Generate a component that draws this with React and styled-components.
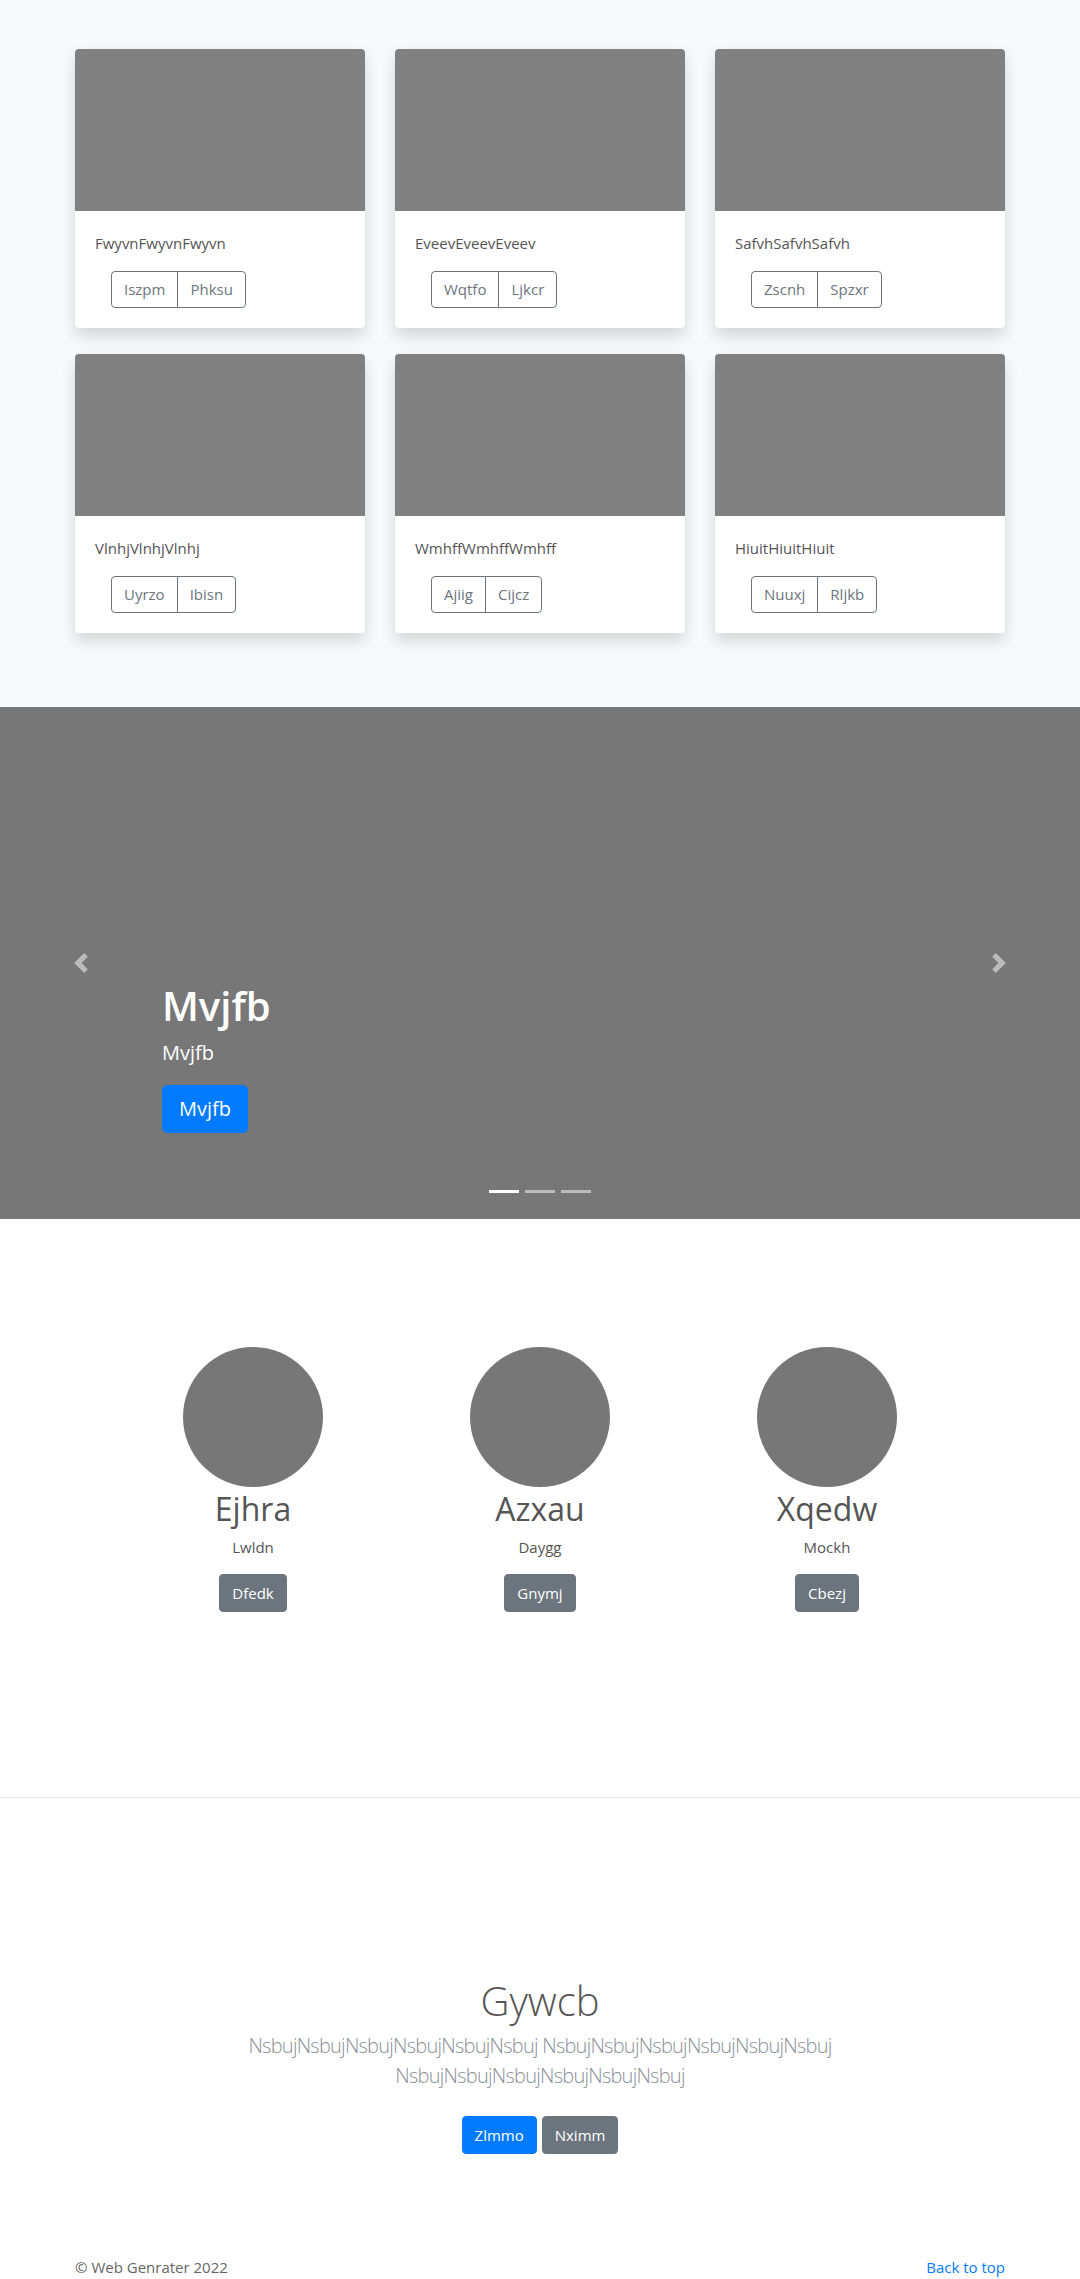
import styled, { createGlobalStyle } from 'styled-components'

const GlobalStyle = createGlobalStyle`
  html, body {
    margin: 0;
    padding: 0;
  }
  body {
    font-family: 'Segoe UI', 'Open Sans', 'Noto Sans', sans-serif;
    font-size: 15px;
    line-height: 1.5;
    color: #555;
    background: #fff;
  }
  * {
    box-sizing: border-box;
  }
`

const albums = [
  { title: 'FwyvnFwyvnFwyvn', actions: ['Iszpm', 'Phksu'] },
  { title: 'EveevEveevEveev', actions: ['Wqtfo', 'Ljkcr'] },
  { title: 'SafvhSafvhSafvh', actions: ['Zscnh', 'Spzxr'] },
  { title: 'VlnhjVlnhjVlnhj', actions: ['Uyrzo', 'Ibisn'] },
  { title: 'WmhffWmhffWmhff', actions: ['Ajiig', 'Cijcz'] },
  { title: 'HiuitHiuitHiuit', actions: ['Nuuxj', 'Rljkb'] },
]

const team = [
  { name: 'Ejhra', role: 'Lwldn', action: 'Dfedk' },
  { name: 'Azxau', role: 'Daygg', action: 'Gnymj' },
  { name: 'Xqedw', role: 'Mockh', action: 'Cbezj' },
]

const Chevron = ({ flip }) => (
  <svg width='20' height='20' viewBox='0 0 8 8' style={flip ? { transform: 'scaleX(-1)' } : undefined}>
    <path fill='#fff' d='M5.25 0l-4 4 4 4 1.5-1.5L4.25 4l2.5-2.5L5.25 0z' />
  </svg>
)

const App = () => {
  return (
    <>
      <GlobalStyle />
      <Album>
        <Container>
          <CardGrid>
            {albums.map((a) => (
              <Card key={a.title}>
                <CardImage />
                <CardBody>
                  <CardText>{a.title}</CardText>
                  <BtnGroup>
                    {a.actions.map((label) => (
                      <OutlineBtn key={label}>{label}</OutlineBtn>
                    ))}
                  </BtnGroup>
                </CardBody>
              </Card>
            ))}
          </CardGrid>
        </Container>
      </Album>

      <Carousel>
        <Control side='left'>
          <Chevron />
        </Control>
        <Caption>
          <CaptionTitle>Mvjfb</CaptionTitle>
          <CaptionText>Mvjfb</CaptionText>
          <Btn variant='primary' size='lg'>
            Mvjfb
          </Btn>
        </Caption>
        <Control side='right'>
          <Chevron flip />
        </Control>
        <Indicators>
          <Indicator active />
          <Indicator />
          <Indicator />
        </Indicators>
      </Carousel>

      <Team>
        <TeamGrid>
          {team.map((m) => (
            <Member key={m.name}>
              <Avatar />
              <MemberName>{m.name}</MemberName>
              <MemberRole>{m.role}</MemberRole>
              <Btn variant='secondary'>{m.action}</Btn>
            </Member>
          ))}
        </TeamGrid>
      </Team>

      <Jumbotron>
        <NarrowContainer>
          <JumboHeading>Gywcb</JumboHeading>
          <Lead>
            NsbujNsbujNsbujNsbujNsbujNsbuj NsbujNsbujNsbujNsbujNsbujNsbuj NsbujNsbujNsbujNsbujNsbujNsbuj
          </Lead>
          <BtnRow>
            <Btn variant='primary'>Zlmmo</Btn>
            <Btn variant='secondary'>Nximm</Btn>
          </BtnRow>
        </NarrowContainer>
      </Jumbotron>

      <Footer>
        <FooterInner>
          <span>© Web Genrater 2022</span>
          <TopLink href='#'>Back to top</TopLink>
        </FooterInner>
      </Footer>
    </>
  )
}

export default App

const Container = styled.div`
  width: 960px;
  margin: 0 auto;
  padding: 0 15px;
`

const Album = styled.section`
  background: #f8f9fa;
  padding: 49px 0 74px;
`

const CardGrid = styled.div`
  display: grid;
  grid-template-columns: repeat(3, 1fr);
  column-gap: 30px;
  row-gap: 26px;
`

const Card = styled.div`
  background: #fff;
  border-radius: 4px;
  overflow: hidden;
  box-shadow: 0 8px 16px rgba(0, 0, 0, 0.15);
`

const CardImage = styled.div`
  height: 162px;
  background: #808080;
`

const CardBody = styled.div`
  padding: 20px;
`

const CardText = styled.p`
  margin: 0 0 16px;
  font-size: 15px;
  line-height: 24px;
  color: #555;
`

const BtnGroup = styled.div`
  display: inline-flex;
  margin-left: 16px;
`

const OutlineBtn = styled.button`
  font-family: inherit;
  font-size: 15px;
  line-height: 23px;
  padding: 6px 12px;
  color: #6c757d;
  background: transparent;
  border: 1px solid #6c757d;
  cursor: pointer;

  &:first-child {
    border-radius: 4px 0 0 4px;
  }
  &:last-child {
    border-radius: 0 4px 4px 0;
    margin-left: -1px;
  }
`

const Btn = styled.button`
  font-family: inherit;
  font-size: ${(p) => (p.size === 'lg' ? '20px' : '15px')};
  line-height: ${(p) => (p.size === 'lg' ? '30px' : '24px')};
  padding: ${(p) => (p.size === 'lg' ? '8px 16px' : '6px 12px')};
  border-radius: ${(p) => (p.size === 'lg' ? '5px' : '4px')};
  color: #fff;
  background: ${(p) => (p.variant === 'primary' ? '#007bff' : '#6c757d')};
  border: 1px solid ${(p) => (p.variant === 'primary' ? '#007bff' : '#6c757d')};
  cursor: pointer;
`

const Carousel = styled.section`
  position: relative;
  height: 512px;
  background: #777;
  display: flex;
  align-items: flex-end;
`

const Caption = styled.div`
  flex: 1;
  margin: 0 162px;
  padding-bottom: 86px;
  color: #fff;
  display: flex;
  flex-direction: column;
  align-items: flex-start;
`

const CaptionTitle = styled.h1`
  margin: 0 0 8px;
  font-size: 40px;
  line-height: 48px;
  font-weight: 600;
`

const CaptionText = styled.p`
  margin: 0 0 17px;
  font-size: 20px;
  line-height: 30px;
`

const Control = styled.div`
  position: absolute;
  top: 0;
  bottom: 0;
  ${(p) => (p.side === 'left' ? 'left: 0;' : 'right: 0;')}
  width: 162px;
  display: flex;
  align-items: center;
  justify-content: center;
  opacity: 0.5;
`

const Indicators = styled.div`
  position: absolute;
  left: 0;
  right: 0;
  bottom: 26px;
  display: flex;
  justify-content: center;
  gap: 6px;
`

const Indicator = styled.span`
  width: 30px;
  height: 3px;
  background: #fff;
  opacity: ${(p) => (p.active ? 1 : 0.5)};
`

const Team = styled.section`
  padding: 128px 0 185px;
  border-bottom: 1px solid #e5e5e5;
`

const TeamGrid = styled.div`
  width: 861px;
  margin: 0 auto;
  display: grid;
  grid-template-columns: repeat(3, 1fr);
`

const Member = styled.div`
  display: flex;
  flex-direction: column;
  align-items: center;
  text-align: center;
`

const Avatar = styled.div`
  width: 140px;
  height: 140px;
  border-radius: 50%;
  background: #777;
`

const MemberName = styled.h2`
  margin: 3px 0 8px;
  font-size: 32px;
  line-height: 38px;
  font-weight: 400;
  color: #555;
`

const MemberRole = styled.p`
  margin: 0 0 16px;
  font-size: 15px;
  line-height: 22px;
  color: #555;
`

const Jumbotron = styled.section`
  padding: 179px 0 48px;
  text-align: center;
`

const NarrowContainer = styled.div`
  max-width: 680px;
  margin: 0 auto;
  padding: 0 15px;
`

const JumboHeading = styled.h1`
  margin: 0 0 6px;
  font-size: 40px;
  line-height: 48px;
  font-weight: 300;
  color: #555;
`

const Lead = styled.p`
  margin: 0 0 25px;
  font-size: 20px;
  line-height: 30px;
  font-weight: 300;
  letter-spacing: -0.75px;
  color: #8a9096;
`

const BtnRow = styled.div`
  display: flex;
  justify-content: center;
  gap: 5px;
  margin: 8px 0;
`

const Footer = styled.footer`
  padding: 45px 0 48px;
`

const FooterInner = styled(Container)`
  display: flex;
  justify-content: space-between;
  font-size: 15px;
  line-height: 24px;
  color: #666;
`

const TopLink = styled.a`
  color: #007bff;
  text-decoration: none;
`
